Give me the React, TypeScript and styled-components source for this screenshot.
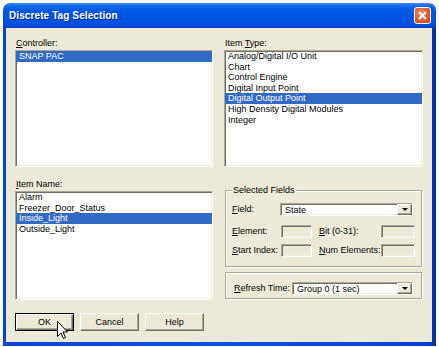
import React from 'react'
import styled, { createGlobalStyle, css } from 'styled-components'

const controllers = ['SNAP PAC']
const itemTypes = [
    'Analog/Digital I/O Unit',
    'Chart',
    'Control Engine',
    'Digital Input Point',
    'Digital Output Point',
    'High Density Digital Modules',
    'Integer',
]
const itemNames = ['Alarm', 'Freezer_Door_Status', 'Inside_Light', 'Outside_Light']

const GlobalStyle = createGlobalStyle`
    html, body {
        margin: 0;
        padding: 0;
        background: #fff;
    }
    body {
        font-family: "Liberation Sans", Arial, sans-serif;
        font-size: 9px;
        color: #000;
    }
`

const sunken = css`
    box-sizing: border-box;
    border: 1px solid;
    border-color: #aca899 #fff #fff #aca899;
    box-shadow: inset 1px 1px 0 #716f64, inset -1px -1px 0 #f1efe2;
`

const raised = css`
    box-sizing: border-box;
    background: #ece9d8;
    border: 1px solid;
    border-color: #fff #716f64 #716f64 #fff;
    box-shadow: inset -1px -1px 0 #aca899;
`

export default function App() {
    return (
        <>
            <GlobalStyle />
            <Window>
                <TitleBar>
                    <Title>Discrete Tag Selection</Title>
                    <CloseButton>
                        <svg width="9" height="9" viewBox="0 0 9 9">
                            <path d="M1 1 L8 8 M8 1 L1 8" stroke="#fff" strokeWidth="2" />
                        </svg>
                    </CloseButton>
                </TitleBar>
                <Frame>
                    <Client>
                        <Field>
                            <Label>
                                <u>C</u>ontroller:
                            </Label>
                            <ListBox $height={117}>
                                {controllers.map((c) => (
                                    <ListItem key={c} $selected>
                                        {c}
                                    </ListItem>
                                ))}
                            </ListBox>
                        </Field>
                        <Field>
                            <Label>
                                Item <u>T</u>ype:
                            </Label>
                            <ListBox $height={117}>
                                {itemTypes.map((t) => (
                                    <ListItem key={t} $selected={t === 'Digital Output Point'}>
                                        {t}
                                    </ListItem>
                                ))}
                            </ListBox>
                        </Field>
                        <Field>
                            <Label>
                                <u>I</u>tem Name:
                            </Label>
                            <ListBox $height={109}>
                                {itemNames.map((n) => (
                                    <ListItem key={n} $selected={n === 'Inside_Light'}>
                                        {n}
                                    </ListItem>
                                ))}
                            </ListBox>
                        </Field>
                        <RightColumn>
                            <Group>
                                <Legend>Selected Fields</Legend>
                                <FieldLine>
                                    <RowLabel $width={48}>
                                        <u>F</u>ield:
                                    </RowLabel>
                                    <Select>
                                        <SelectText>State</SelectText>
                                        <DropButton>
                                            <Triangle />
                                        </DropButton>
                                    </Select>
                                </FieldLine>
                                <ParamGrid>
                                    <RowLabel>
                                        <u>E</u>lement:
                                    </RowLabel>
                                    <DisabledBox />
                                    <RowLabel $indent>
                                        <u>B</u>it (0-31):
                                    </RowLabel>
                                    <DisabledBox />
                                    <RowLabel>
                                        <u>S</u>tart Index:
                                    </RowLabel>
                                    <DisabledBox />
                                    <RowLabel $indent>
                                        <u>N</u>um Elements:
                                    </RowLabel>
                                    <DisabledBox />
                                </ParamGrid>
                            </Group>
                            <RefreshGroup>
                                <RowLabel $width={58}>
                                    <u>R</u>efresh Time:
                                </RowLabel>
                                <Select>
                                    <SelectText>Group 0 (1 sec)</SelectText>
                                    <DropButton>
                                        <Triangle />
                                    </DropButton>
                                </Select>
                            </RefreshGroup>
                        </RightColumn>
                        <ButtonRow>
                            <Button $default>
                                OK
                                <Cursor width="12" height="19" viewBox="0 0 12 19">
                                    <path
                                        d="M0.5 0.5 L0.5 15.5 L4 12 L6.5 17.5 L8.5 16.5 L6 11 L10.5 11 Z"
                                        fill="#fff"
                                        stroke="#000"
                                        strokeWidth="1"
                                    />
                                </Cursor>
                            </Button>
                            <Button>Cancel</Button>
                            <Button>Help</Button>
                        </ButtonRow>
                    </Client>
                </Frame>
            </Window>
        </>
    )
}

const Window = styled.div`
    margin: 3px 0 0 3px;
    width: 433px;
    height: 343px;
    display: flex;
    flex-direction: column;
    border-radius: 7px 7px 0 0;
    overflow: hidden;
`

const TitleBar = styled.div`
    height: 25px;
    flex: none;
    display: flex;
    align-items: center;
    justify-content: space-between;
    padding: 0 5px 0 6px;
    background: linear-gradient(
        #3c8cf8 0%,
        #1467ec 12%,
        #0558e4 30%,
        #0054e3 60%,
        #0050dc 85%,
        #003ec4 100%
    );
`

const Title = styled.span`
    color: #fff;
    font-weight: bold;
    font-size: 10px;
    text-shadow: 1px 1px 0 #0c2a8c;
    letter-spacing: 0.1px;
`

const CloseButton = styled.div`
    width: 17px;
    height: 17px;
    box-sizing: border-box;
    border: 1px solid #fff;
    border-radius: 3px;
    background: radial-gradient(circle at 40% 35%, #f0906c 0%, #e05a32 55%, #c53a14 100%);
    display: flex;
    align-items: center;
    justify-content: center;
`

const Frame = styled.div`
    flex: 1;
    display: flex;
    padding: 0 4px 4px 3px;
    background: linear-gradient(to right, #0845d6, #0a50e2 50%, #0540d4 98%, #002a9e);
`

const Client = styled.div`
    flex: 1;
    background: #ece9d8;
    display: grid;
    grid-template-columns: 198px 199px;
    grid-template-rows: auto auto auto;
    column-gap: 11px;
    row-gap: 12px;
    padding: 10px 9px 11px 9px;
    align-items: start;
`

const Field = styled.div`
    display: flex;
    flex-direction: column;
`

const Label = styled.div`
    height: 11px;
    line-height: 11px;
    margin: 0 0 1px 1px;
    white-space: nowrap;
`

const ListBox = styled.div<{ $height: number }>`
    ${sunken};
    height: ${(p) => p.$height}px;
    background: #fff;
    padding: 0;
    overflow: hidden;
`

const ListItem = styled.div<{ $selected?: boolean }>`
    height: 10.6px;
    line-height: 10.6px;
    padding-left: 3px;
    white-space: nowrap;
    background: ${(p) => (p.$selected ? '#316ac5' : 'transparent')};
    color: ${(p) => (p.$selected ? '#fff' : '#000')};
`

const RightColumn = styled.div`
    display: flex;
    flex-direction: column;
    padding: 0 1px;
`

const Group = styled.fieldset`
    margin: 6px 0 0 0;
    padding: 7px 8px 9px 6px;
    border: 1px solid #aca899;
    box-shadow: inset 1px 1px 0 #fff, 1px 1px 0 #fff;
    min-width: 0;
`

const Legend = styled.legend`
    padding: 0 1px;
    margin-left: 0;
    line-height: 11px;
    background: #ece9d8;
`

const FieldLine = styled.div`
    display: flex;
    align-items: center;
    height: 13px;
`

const RowLabel = styled.div<{ $width?: number; $indent?: boolean }>`
    flex: none;
    width: ${(p) => (p.$width ? `${p.$width}px` : 'auto')};
    padding-left: ${(p) => (p.$indent ? '7px' : '0')};
    white-space: nowrap;
    line-height: 13px;
`

const ParamGrid = styled.div`
    display: grid;
    grid-template-columns: 49px 31px 1fr 34px;
    grid-auto-rows: 13px;
    row-gap: 6px;
    margin-top: 9px;
    align-items: center;
`

const DisabledBox = styled.div`
    ${sunken};
    height: 13px;
    background: #ece9d8;
`

const Select = styled.div`
    ${sunken};
    flex: 1;
    height: 13px;
    background: #fff;
    display: flex;
    align-items: stretch;
    padding: 1px;
`

const SelectText = styled.span`
    flex: 1;
    padding-left: 3px;
    line-height: 11px;
    white-space: nowrap;
`

const DropButton = styled.div`
    ${raised};
    width: 15px;
    margin: -1px -1px -1px 0;
    display: flex;
    align-items: center;
    justify-content: center;
`

const Triangle = styled.div`
    width: 0;
    height: 0;
    border-left: 3px solid transparent;
    border-right: 3px solid transparent;
    border-top: 3px solid #000;
`

const RefreshGroup = styled.div`
    margin-top: 5px;
    display: flex;
    align-items: center;
    padding: 9px 8px 3px 8px;
    border: 1px solid #aca899;
    box-shadow: inset 1px 1px 0 #fff, 1px 1px 0 #fff;
`

const ButtonRow = styled.div`
    grid-column: 1 / -1;
    display: flex;
    gap: 6px;
    margin-top: 1px;
`

const Button = styled.div<{ $default?: boolean }>`
    ${raised};
    position: relative;
    width: 59px;
    height: 18px;
    display: flex;
    align-items: center;
    justify-content: center;
    ${(p) =>
        p.$default &&
        css`
            border-color: #000;
            box-shadow: inset 1px 1px 0 #fff, inset -1px -1px 0 #716f64, inset -2px -2px 0 #aca899;
        `}
`

const Cursor = styled.svg`
    position: absolute;
    left: 41px;
    top: 7px;
`
